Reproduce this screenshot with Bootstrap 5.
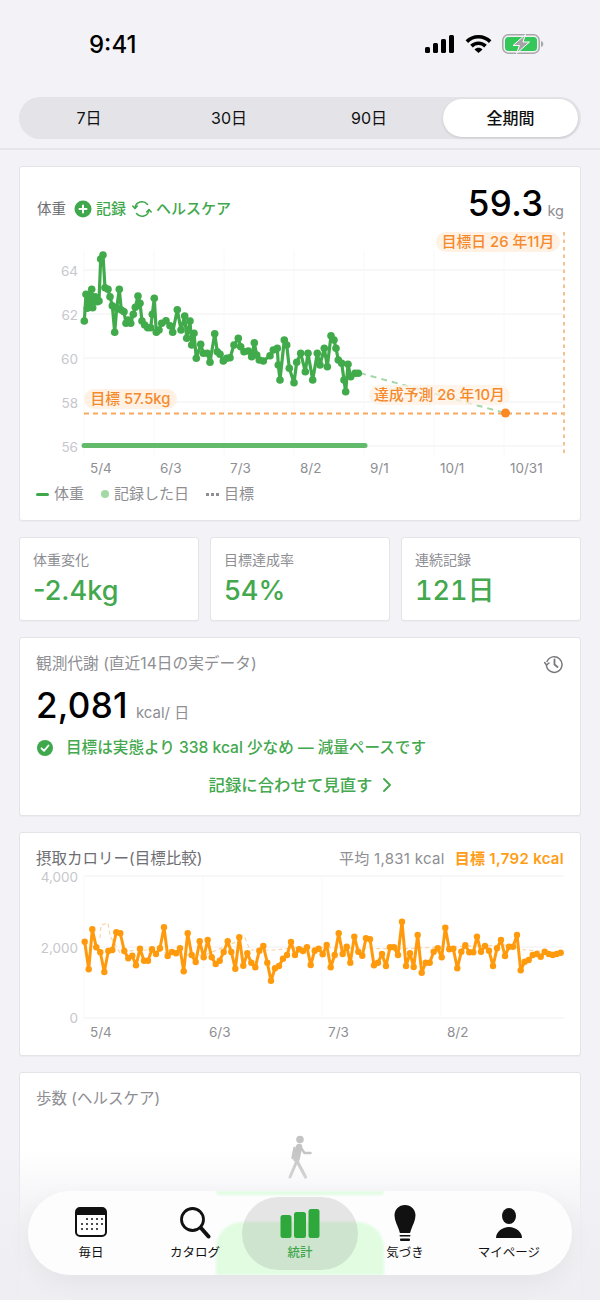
<!DOCTYPE html>
<html lang="ja">
<head>
  <meta charset="UTF-8">
  <meta name="viewport" content="width=device-width, initial-scale=1.0">
  <title>統計</title>
  <link href="https://cdn.jsdelivr.net/npm/bootstrap@5.3.3/dist/css/bootstrap.min.css" rel="stylesheet">
  <style>
    body { background: #f2f2f7; font-family: Inter, "Noto Sans CJK JP", sans-serif; color: #000; }
    .phone { width: 600px; height: 1300px; overflow: hidden; position: relative; }
    .status-bar { height: 97px; padding: 31px 56px 0 89px; }
    .status-time { font-size: 24px; font-weight: 500; line-height: 28px; }
    .status-icons { height: 26px; gap: 10px; }
    .seg-wrap { padding: 0 19px 9px; border-bottom: 2px solid #e5e5ea; height: 53px; }
    .seg { height: 42px; background: #e3e3e8; padding: 2px 2px 2px 0; }
    .seg-item { width: 140px; font-size: 16px; line-height: 38px; text-align: center; color: #111; }
    .seg-on { width: 135px; margin-left: 4px; background: #fff; box-shadow: 0 1px 3px rgba(0,0,0,.12); font-weight: 500; }
    .page-body { padding: 16px 19px 0; gap: 16px; }
    .panel { background: #fff; border: 1px solid #e3e3e8; border-radius: 3px; box-shadow: 0 1px 1px rgba(0,0,0,.03); }
    .panel-weight { height: 355px; }
    .weight-head { height: 65px; padding: 16px 16px 0 17px; }
    .head-left { margin-top: 15px; }
    .head-title { font-size: 14.5px; color: #6e6e73; }
    .head-link { font-size: 15px; color: #3fa84c; font-weight: 500; }
    .refresh-ic { margin-left: 2px; }
    .big-num { font-size: 35px; font-weight: 500; line-height: 40px; letter-spacing: .3px; }
    .big-unit { font-size: 14.5px; color: #8e8e93; }
    .chart-box { position: relative; }
    .chart-box svg { display: block; }
    .axis-y { font-size: 13.5px; fill: #c7c7cc; text-anchor: end; }
    .axis-x { font-size: 13.5px; fill: #8e8e93; }
    .chart-pill { position: absolute; background: #fff1e4; color: #f58a2c; font-size: 14.8px; font-weight: 500; height: 20px; line-height: 20px; text-align: center; border-radius: 10px; white-space: nowrap; }
    .pill-date { left: 416px; top: 0; width: 124px; }
    .pill-goal { left: 64px; top: 157px; width: 93px; }
    .pill-pred { left: 349px; top: 153px; width: 141px; background: rgba(255,241,228,.75); }
    .legend-row { padding: 6px 0 0 16px; gap: 5px; font-size: 15px; color: #8e8e93; line-height: 20px; }
    .lg-dash { width: 13px; height: 3px; background: #3fa84c; border-radius: 2px; }
    .lg-dot { width: 8px; height: 8px; background: #a3d9a5; border-radius: 50%; margin-left: 12px; }
    .lg-dots { width: 13px; height: 3px; margin-left: 12px; background: repeating-linear-gradient(90deg, #8e8e93 0 3px, transparent 3px 5px); }
    .stat-grid { grid-template-columns: repeat(3, 180px); gap: 11px; }
    .panel-stat { height: 84px; padding: 12px 13px; }
    .stat-label { font-size: 14px; color: #8e8e93; line-height: 20px; }
    .stat-val { font-size: 27px; font-weight: 500; color: #43a84e; line-height: 34px; margin-top: 4px; }
    .stat-tnum { font-feature-settings: "tnum"; }
    .panel-meta { height: 179px; padding: 15px 16px 0 16px; }
    .meta-title { font-size: 15.7px; color: #8e8e93; line-height: 22px; }
    .meta-num { font-size: 35px; font-weight: 500; line-height: 40px; margin-top: 10px; letter-spacing: .3px; }
    .meta-unit { font-size: 15px; font-weight: 400; color: #8e8e93; letter-spacing: 0; }
    .meta-note { font-size: 15.6px; font-weight: 500; color: #43a84e; line-height: 22px; margin: 4px 0 0 1px; gap: 13px; }
    .meta-link { font-size: 16.4px; font-weight: 500; color: #43a84e; line-height: 22px; margin-top: 15px; gap: 11px; }
    .panel-cal { height: 224px; }
    .cal-head { padding: 15px 16px 0 16px; height: 36px; }
    .cal-title { font-size: 15.5px; color: #6e6e73; line-height: 22px; }
    .cal-avg { font-size: 15px; color: #8e8e93; letter-spacing: .3px; line-height: 22px; }
    .cal-goal { font-size: 15px; color: #ff9d14; font-weight: 600; letter-spacing: .3px; line-height: 22px; margin-left: 10px; }
    .panel-steps { height: 300px; padding: 15px 16px; }
    .steps-title { font-size: 15.5px; color: #8e8e93; line-height: 22px; }
    .walk-icon { display: block; margin: 25px auto 0; }
    .bottom-fade { position: absolute; left: 0; right: 0; bottom: 0; height: 150px; background: linear-gradient(180deg, rgba(242,242,247,0) 0, rgba(240,240,244,.85) 45%, rgba(238,238,242,.97) 100%); }
    .tab-bar { position: absolute; left: 28px; top: 1191px; width: 544px; height: 84px; border-radius: 42px; background: rgba(253,253,254,.96); box-shadow: 0 8px 24px rgba(0,0,0,.05); overflow: hidden; }
    .tab-glow { position: absolute; left: 188px; width: 168px; background: #e1fce1; filter: blur(1px); }
    .tab-glow.t1 { top: 0; height: 4px; border-radius: 0 0 30px 30px; }
    .tab-glow.t2 { top: 31px; height: 53px; border-radius: 26px 26px 0 0; }
    .tab-on-bg { position: absolute; left: 214px; top: 6px; width: 116px; height: 73px; border-radius: 38px; background: rgba(120,120,120,.18); }
    .tab-item { position: absolute; top: 12px; width: 100px; text-align: center; font-size: 12.5px; line-height: 16px; color: #111; }
    .tab-item svg { display: block; margin: 0 auto; height: 42px; }
    .tab-on { color: #3fa84c; font-weight: 500; }
  </style>
</head>
<body>
<div class="phone">
  <div class="status-bar d-flex justify-content-between">
    <div class="status-time">9:41</div>
    <div class="status-icons d-flex align-items-center">
      <svg width="30" height="18" viewBox="0 0 30 18"><rect x="0" y="12" width="5" height="6" rx="1.5"/><rect x="8" y="8" width="5" height="10" rx="1.5"/><rect x="16" y="4" width="5" height="14" rx="1.5"/><rect x="24" y="0" width="5" height="18" rx="1.5"/></svg>
      <svg width="27" height="18" viewBox="0 0 27 18"><path d="M13.5 0C8.400 0 3.900 2 .6 5.300l2.500 2.600A14.700 14.700 0 0 1 13.500 3.600c4 0 7.700 1.600 10.400 4.300l2.500-2.600C23.100 2 18.600 0 13.500 0z"/><path d="M13.500 6.400c-3.300 0-6.200 1.300-8.300 3.400l2.600 2.600a8.100 8.100 0 0 1 11.400 0l2.600-2.600c-2.100-2.100-5-3.400-8.300-3.400z"/><path d="M13.500 12.700c-1.600 0-3 .6-4 1.700l4 3.600 4-3.600c-1-1.100-2.400-1.700-4-1.700z"/></svg>
      <svg width="42" height="20" viewBox="0 0 42 20"><rect x=".8" y=".8" width="36.400" height="18.400" rx="5.500" fill="none" stroke="#a8a8a8" stroke-width="1.500"/><rect x="3" y="3" width="32" height="14" rx="3.500" fill="#34c759"/><path d="M39 7c1.500.4 2.300 1.500 2.300 3s-.8 2.600-2.300 3z" fill="#a8a8a8"/><path d="M23.500 .5 11 11.500h6.500l-3 8 13-11.500h-6.500z" fill="#a4a4a4" stroke="#fff" stroke-width="1"/></svg>
    </div>
  </div>
  <div class="seg-wrap">
    <div class="seg d-flex rounded-pill">
      <div class="seg-item">7日</div>
      <div class="seg-item">30日</div>
      <div class="seg-item">90日</div>
      <div class="seg-item seg-on rounded-pill">全期間</div>
    </div>
  </div>

  <div class="page-body d-flex flex-column">
    <div class="panel panel-weight">
      <div class="weight-head d-flex justify-content-between">
        <div class="head-left d-flex align-items-center gap-1 align-self-start">
          <span class="head-title me-1">体重</span>
          <svg width="18" height="18" viewBox="0 0 18 18"><circle cx="9" cy="9" r="8.500" fill="#3fa84c"/><path d="M9 5.500v7M5.500 9h7" stroke="#fff" stroke-width="2" stroke-linecap="round"/></svg>
          <span class="head-link">記録</span>
          <svg class="refresh-ic" width="20" height="18" viewBox="0 0 20 18" fill="none" stroke="#3fa84c" stroke-width="1.500" stroke-linecap="round" stroke-linejoin="round"><path d="M3 8a7 7 0 0 1 12.500-3.500"/><path d="M17 10a7 7 0 0 1-12.500 3.500"/><path d="M.8 6 3 8.500 5.300 6"/><path d="M19.200 12 17 9.500 14.700 12"/></svg>
          <span class="head-link">ヘルスケア</span>
        </div>
        <div class="d-flex align-items-baseline gap-1 align-self-start">
          <span class="big-num">59.3</span><span class="big-unit">kg</span>
        </div>
      </div>
      <div class="chart-box">
        <svg id="weightChart" width="560" height="246" viewBox="20 232 560 246">
          <g stroke="#f0f0f3" stroke-width="1">
            <path d="M84 270H564M84 314H564M84 358H564M84 402H564M84 446H564"/>
            <path d="M84 250V455M154 250V455M224 250V455M294 250V455M364 250V455M434 250V455M504 250V455" stroke="#f8f8fa"/>
          </g>
          <text class="axis-y" x="78" y="276">64</text>
          <text class="axis-y" x="78" y="320">62</text>
          <text class="axis-y" x="78" y="364">60</text>
          <text class="axis-y" x="78" y="408">58</text>
          <text class="axis-y" x="78" y="452">56</text>
          <text class="axis-x" x="90" y="473">5/4</text>
          <text class="axis-x" x="160" y="473">6/3</text>
          <text class="axis-x" x="230" y="473">7/3</text>
          <text class="axis-x" x="300" y="473">8/2</text>
          <text class="axis-x" x="370" y="473">9/1</text>
          <text class="axis-x" x="440" y="473">10/1</text>
          <text class="axis-x" x="510" y="473">10/31</text>
          <path d="M84 413.500H564" stroke="#f9a85e" stroke-width="1.800" stroke-dasharray="5 4"/>
          <path d="M564 232V455" stroke="#f7c08c" stroke-width="2" stroke-dasharray="3.500 4"/>
          <path d="M84 445.500H365" stroke="#62bb6b" stroke-width="5" stroke-linecap="round"/>
          <path d="M360 373 505 413" stroke="#a5d6a9" stroke-width="2" stroke-dasharray="6 5"/>
          <circle cx="505.500" cy="413" r="4.500" fill="#fb8a24"/>
        </svg>
        <span class="chart-pill pill-date">目標日 26 年11月</span>
        <span class="chart-pill pill-goal">目標 57.5kg</span>
        <span class="chart-pill pill-pred">達成予測 26 年10月</span>
      </div>
      <div class="legend-row d-flex align-items-center">
        <span class="lg-dash"></span><span>体重</span>
        <span class="lg-dot"></span><span>記録した日</span>
        <span class="lg-dots"></span><span>目標</span>
      </div>
    </div>

    <div class="stat-grid d-grid">
      <div class="panel panel-stat"><div class="stat-label">体重変化</div><div class="stat-val">-2.4kg</div></div>
      <div class="panel panel-stat"><div class="stat-label">目標達成率</div><div class="stat-val">54%</div></div>
      <div class="panel panel-stat"><div class="stat-label">連続記録</div><div class="stat-val stat-tnum">121日</div></div>
    </div>

    <div class="panel panel-meta">
      <div class="d-flex justify-content-between align-items-center">
        <div class="meta-title">観測代謝 (直近14日の実データ)</div>
        <svg width="20" height="20" viewBox="0 0 20 20" fill="none" stroke="#77777c" stroke-width="1.500" stroke-linecap="round" stroke-linejoin="round"><path d="M3 7.500a7.800 7.800 0 1 1-.6 3.500"/><path d="M.6 8.500 2.600 11 5 9"/><path d="M10.500 5.500v5l3 2.500" stroke-width="1.800"/></svg>
      </div>
      <div class="meta-num d-flex align-items-baseline">2,081<span class="meta-unit ms-2">kcal/ 日</span></div>
      <div class="meta-note d-flex align-items-center">
        <svg width="16" height="16" viewBox="0 0 16 16"><circle cx="8" cy="8" r="8" fill="#3fa84c"/><path d="M4.500 8.300 7 10.800 11.500 5.500" fill="none" stroke="#fff" stroke-width="1.800" stroke-linecap="round" stroke-linejoin="round"/></svg>
        <span>目標は実態より 338 kcal 少なめ — 減量ペースです</span>
      </div>
      <div class="meta-link d-flex justify-content-center align-items-center">
        <span>記録に合わせて見直す</span>
        <svg width="8" height="14" viewBox="0 0 8 14" fill="none" stroke="#43a84e" stroke-width="1.800" stroke-linecap="round" stroke-linejoin="round"><path d="M1 1l6 6-6 6"/></svg>
      </div>
    </div>

    <div class="panel panel-cal">
      <div class="cal-head d-flex justify-content-between">
        <div class="cal-title">摂取カロリー(目標比較)</div>
        <div class="d-flex"><span class="cal-avg">平均 1,831 kcal</span><span class="cal-goal">目標 1,792 kcal</span></div>
      </div>
      <svg id="calChart" class="d-block" width="560" height="172" viewBox="20 869 560 172">
        <path d="M84 876H564M84 947H564M84 1018H564" stroke="#f0f0f3"/>
        <path d="M84 876V1018M203 876V1018M322 876V1018M441 876V1018" stroke="#f8f8fa"/>
        <text class="axis-y" x="78" y="882">4,000</text>
        <text class="axis-y" x="78" y="953">2,000</text>
        <text class="axis-y" x="78" y="1023">0</text>
        <text class="axis-x" x="90" y="1037">5/4</text>
        <text class="axis-x" x="209" y="1037">6/3</text>
        <text class="axis-x" x="328" y="1037">7/3</text>
        <text class="axis-x" x="447" y="1037">8/2</text>
      </svg>
    </div>

    <div class="panel panel-steps">
      <div class="steps-title">歩数 (ヘルスケア)</div>
      <svg class="walk-icon" width="26" height="44" viewBox="0 0 26 44" fill="none" stroke="#c4c4c4" stroke-linecap="round" stroke-linejoin="round">
        <circle cx="13" cy="4.500" r="3.800" fill="#c4c4c4" stroke="none"/>
        <path d="M12 12 9.500 24" stroke-width="6.500"/>
        <path d="M10 26l8.500 16" stroke-width="3.200"/>
        <path d="M9 28 3 42" stroke-width="3"/>
        <path d="M14 13l3.500 5h6" stroke-width="2.500"/>
        <path d="M7.500 13 5.500 23" stroke-width="2.500"/>
      </svg>
    </div>
  </div>

  <div class="bottom-fade"></div>

  <nav class="tab-bar">
    <div class="tab-glow t1"></div>
    <div class="tab-glow t2"></div>
    <div class="tab-on-bg"></div>
    <div class="tab-item" style="left: 13px">
      <svg width="32" height="42" viewBox="0 0 32 42"><rect x="1" y="5" width="30" height="28" rx="4" fill="#fff" stroke="#111" stroke-width="2"/><path d="M1 9a4 4 0 0 1 4-4h22a4 4 0 0 1 4 4v3H1z" fill="#111"/><g fill="#222"><circle cx="12" cy="16" r="1.100"/><circle cx="17" cy="16" r="1.100"/><circle cx="22" cy="16" r="1.100"/><circle cx="27" cy="16" r="1.100"/><circle cx="7" cy="21" r="1.100"/><circle cx="12" cy="21" r="1.100"/><circle cx="17" cy="21" r="1.100"/><circle cx="22" cy="21" r="1.100"/><circle cx="27" cy="21" r="1.100"/><circle cx="7" cy="26" r="1.100"/><circle cx="12" cy="26" r="1.100"/><circle cx="17" cy="26" r="1.100"/><circle cx="22" cy="26" r="1.100"/></g></svg>
      毎日
    </div>
    <div class="tab-item" style="left: 117px">
      <svg width="32" height="42" viewBox="0 0 32 42" fill="none" stroke="#111"><circle cx="13.500" cy="16.500" r="11" stroke-width="2.800"/><path d="M22 25 29.500 33.500" stroke-width="4" stroke-linecap="round"/></svg>
      カタログ
    </div>
    <div class="tab-item tab-on" style="left: 222px">
      <svg width="40" height="42" viewBox="0 0 40 42" fill="#2ea83a"><rect x="0.500" y="12" width="11" height="23" rx="2.500"/><rect x="14" y="9" width="12" height="26" rx="2.500"/><rect x="28.500" y="6" width="11" height="29" rx="2.500"/></svg>
      統計
    </div>
    <div class="tab-item" style="left: 327px">
      <svg width="22" height="42" viewBox="0 0 22 42" fill="#111"><path d="M11 2C5 2 .5 6.500.5 12.500c0 5 3 10 4.500 14.500.5 1.500.7 2.500 1 3h10c.3-.5.5-1.500 1-3 1.500-4.500 4.500-9.500 4.500-14.500C21.500 6.500 17 2 11 2z"/><rect x="5.500" y="32" width="11" height="1.500" rx=".7"/><rect x="6" y="35.500" width="10" height="2.500" rx="1"/></svg>
      気づき
    </div>
    <div class="tab-item" style="left: 431px">
      <svg width="28" height="42" viewBox="0 0 28 42" fill="#111"><ellipse cx="14" cy="13" rx="7" ry="8"/><path d="M1 35c0-6 6-11 13-11s13 5 13 11z"/></svg>
      マイページ
    </div>
  </nav>
</div>

<script src="https://cdn.jsdelivr.net/npm/bootstrap@5.3.3/dist/js/bootstrap.bundle.min.js"></script>
<script>
// points read from the chart, as [x, y] in page pixels
const SVG_NS = 'http://www.w3.org/2000/svg';

function drawSeries(svgId, pts, color, width, r) {
  const svg = document.getElementById(svgId);
  const line = document.createElementNS(SVG_NS, 'polyline');
  line.setAttribute('points', pts.map(p => p.join(',')).join(' '));
  line.setAttribute('fill', 'none');
  line.setAttribute('stroke', color);
  line.setAttribute('stroke-width', width);
  line.setAttribute('stroke-linejoin', 'round');
  svg.appendChild(line);
  pts.forEach(p => {
    const c = document.createElementNS(SVG_NS, 'circle');
    c.setAttribute('cx', p[0]);
    c.setAttribute('cy', p[1]);
    c.setAttribute('r', r);
    c.setAttribute('fill', color);
    svg.appendChild(c);
  });
}

const crop = (raw, ox, oy) => raw.map(p => [+(ox + p[0] / 3).toFixed(1), +(oy + p[1] / 3).toFixed(1)]);

const weightA = crop([[13,228],[18,148],[22,190],[26,150],[30,185],[35,133],[38,188],[45,155],[52,170],[57,168],[62,42],[69,30],[75,128],[84,133],[90,155],[97,182],[104,262],[110,190],[118,133],[124,195],[132,200],[138,235],[145,225],[152,235],[160,208],[166,187],[174,153],[180,175],[186,228],[194,240],[203,248],[212,248],[217,208],[223,160],[229,262],[237,255],[245,235],[258,227],[270,242],[278,262],[292,194],[303,255],[314,213],[320,280],[330,228],[335,300],[342,265],[349,340],[362,298],[370,325],[382,325],[390,352],[404,266],[412,320],[420,328],[430,348],[440,340]], 80, 245);
const weightB = crop([[30,128],[42,90],[55,70],[62,95],[72,110],[85,108],[95,125],[103,83],[110,120],[118,135],[130,138],[150,122],[160,105],[172,100],[175,150],[180,195],[193,75],[200,90],[208,160],[222,203],[230,142],[242,115],[256,170],[264,115],[278,195],[292,115],[300,150],[313,100],[322,155],[333,62],[342,75],[348,100],[355,135],[365,145],[372,195],[377,230],[384,148],[392,185],[405,175],[415,175]], 220, 315);
drawSeries('weightChart', weightA.concat(weightB), '#41ab4b', 3.2, 3.8);

// thin dashed target line goes under the intake line
const calSvg = document.getElementById('calChart');
const goalLine = document.createElementNS(SVG_NS, 'path');
goalLine.setAttribute('d', 'M100 938 101 925 108 923 110 936 120 953 135 950 155 950 175 955 205 955 245 938 250 950 275 950 300 947 340 948 400 949 440 947 510 945 525 950 563 953');
goalLine.setAttribute('fill', 'none');
goalLine.setAttribute('stroke', '#fbd3a4');
goalLine.setAttribute('stroke-width', '1.200');
goalLine.setAttribute('stroke-dasharray', '4 3');
calSvg.appendChild(goalLine);

const calA = crop([[194,305],[206,388],[217,268],[229,322],[241,337],[253,396],[265,333],[277,330],[289,277],[301,280],[313,333],[325,355],[337,347],[348,376],[360,326],[372,362],[384,362],[396,328],[408,342],[420,325],[432,262],[443,348],[456,336],[468,340],[480,325],[491,394],[503,280],[515,345],[527,366],[539,304],[551,352],[563,300],[575,352],[587,372],[599,362],[611,336],[623,304],[634,336],[646,386],[658,292],[670,377],[682,340],[694,368],[706,382],[718,332],[730,318],[742,368],[753,422],[765,385],[777,378],[789,356],[801,345],[813,306],[825,345],[837,328],[849,333],[861,322]], 20, 840);
const calB = crop([[32,375],[44,332],[56,326],[68,343],[80,315],[92,382],[104,345],[116,280],[128,342],[140,320],[151,368],[163,290],[175,335],[187,347],[198,295],[210,298],[222,376],[234,368],[246,342],[258,378],[270,322],[282,322],[294,345],[306,245],[318,378],[330,340],[341,381],[353,285],[365,398],[377,368],[389,368],[401,335],[413,325],[425,352],[436,263],[448,328],[460,326],[472,385],[484,335],[496,316],[508,337],[520,337],[531,290],[543,335],[555,318],[567,332],[579,378],[591,325],[603,300],[615,348],[627,320],[639,320],[651,285],[662,391],[674,365],[686,360],[698,345],[710,342],[722,350],[734,335],[746,342],[758,345],[770,342],[782,338]], 300, 840);
drawSeries('calChart', calA.concat(calB), '#ff9a0d', 3, 3.2);
</script>
</body>
</html>
